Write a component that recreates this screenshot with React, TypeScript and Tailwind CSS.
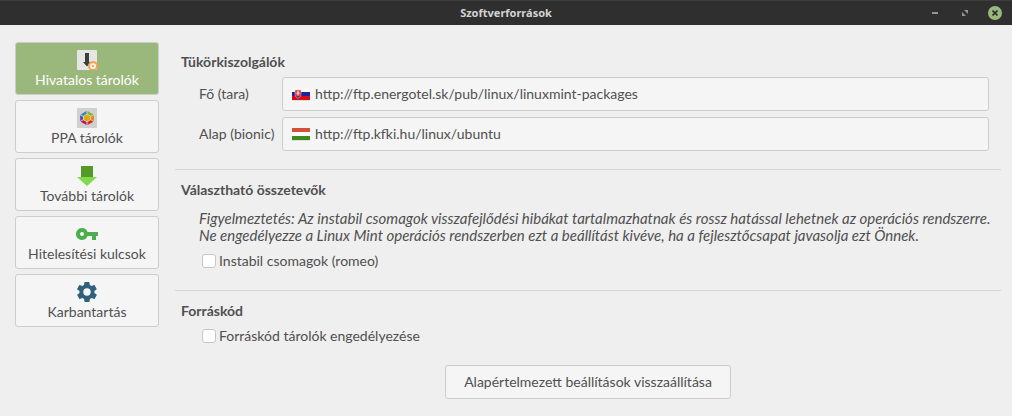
import { useState } from 'react';
import type { ReactNode } from 'react';

function RepositoryIcon() {
  return (
    <svg width="22" height="20" viewBox="0 0 22 20" aria-hidden="true">
      <rect x="1" width="20" height="20" rx="1" fill="#e6e6e6" />
      <path d="M9 3h4v9h1.500L11 16.500 7 12h2z" fill="#3c403d" />
      <circle cx="17" cy="16" r="5" fill="#f6a451" />
      <circle cx="17" cy="16" r="2.100" fill="none" stroke="#fff" strokeWidth="1.500" />
      <path d="M17 13v1M17 18v1M14 16h1M19 16h1M14.900 13.900l.7.7M18.400 17.400l.7.7M19.100 13.900l-.7.7M15.600 17.400l-.7.7" stroke="#fff" strokeWidth="1" />
    </svg>
  );
}

function PpaIcon() {
  return (
    <svg width="20" height="20" viewBox="0 0 20 20" aria-hidden="true">
      <rect width="20" height="20" rx="1" fill="#d0d0d0" />
      <path d="M9.500 3v3.300L6.500 8 3.600 6.400z" fill="#3584c8" />
      <path d="M10.500 3l6 3.400L13.500 8l-3-1.700z" fill="#86b52c" />
      <path d="M16.900 7.200v5.800L14 11.600V8.700z" fill="#f08020" />
      <path d="M16.400 13.700l-5.900 3.400v-3.300l3-1.800z" fill="#d5281f" />
      <path d="M9.500 17.100l-5.900-3.400L6.500 12l3 1.800z" fill="#b8195f" />
      <path d="M3.100 13V7.200L6 8.700v2.900z" fill="#5a4fae" />
      <path d="M10 6.200l3.400 1.900v3.800L10 13.800l-3.400-1.900V8.100z" fill="#d9a912" stroke="#eadfb0" strokeWidth=".6" />
    </svg>
  );
}

function DownloadIcon() {
  return (
    <svg width="20" height="20" viewBox="0 0 20 20" aria-hidden="true">
      <path d="M4 0h12v11H4z" fill="#539a27" />
      <path d="M0 11h20L10 20z" fill="#83d94b" />
    </svg>
  );
}

function KeyIcon() {
  return (
    <svg width="22" height="20" viewBox="0 0 22 20" aria-hidden="true">
      <path
        fillRule="evenodd"
        d="M6 4a6 6 0 0 1 5.600 4H22v4h-2v4h-4v-4h-4.400A6 6 0 1 1 6 4zm0 4a2 2 0 1 0 0 4 2 2 0 0 0 0-4z"
        fill="#4cae50"
      />
    </svg>
  );
}

function GearIcon() {
  return (
    <svg width="20" height="20" viewBox="2 2 20 20" aria-hidden="true">
      <path
        d="M19.4 13a7.8 7.8 0 0 0 0-2l2.1-1.6c.2-.2.2-.4.1-.6l-2-3.5c-.1-.2-.4-.3-.6-.2l-2.5 1a7.3 7.3 0 0 0-1.7-1l-.4-2.7a.5.5 0 0 0-.5-.4h-4c-.2 0-.4.2-.5.4L9 5.1a7.3 7.3 0 0 0-1.7 1l-2.5-1c-.2-.1-.5 0-.6.2l-2 3.5c-.1.2-.1.5.1.6L4.5 11a7.8 7.8 0 0 0 0 2l-2.1 1.6c-.2.2-.2.4-.1.6l2 3.5c.1.2.4.3.6.2l2.5-1c.5.4 1.1.7 1.7 1l.4 2.7c0 .2.2.4.5.4h4c.2 0 .4-.2.5-.4l.4-2.7a7.3 7.3 0 0 0 1.7-1l2.5 1c.2.1.5 0 .6-.2l2-3.5c.1-.2.1-.5-.1-.6zM12 15.7a3.7 3.7 0 1 1 0-7.4 3.7 3.7 0 0 1 0 7.4z"
        fill="#31607a"
        fillRule="evenodd"
      />
    </svg>
  );
}

function SlovakFlag() {
  return (
    <svg width="18" height="14" viewBox="0 0 18 14" aria-hidden="true">
      <path d="M0 1h18v4H0z" fill="#f8f8f8" />
      <path d="M0 5h18v4H0z" fill="#1b249b" />
      <path d="M0 9h18v4H0z" fill="#d90c12" />
      <path d="M0 13h18v1H0z" fill="#dedede" />
      <path d="M3 3h6v4.500c0 1.800-1.200 2.900-3 3.700-1.800-.8-3-1.900-3-3.700z" fill="#e32b34" stroke="#f5d4d6" strokeWidth=".5" />
      <path d="M6 3.800v5M4.700 5.100h2.600M4.300 6.800h3.400" stroke="#fff" strokeWidth=".8" />
      <path d="M4 9.400q2-1.500 4 0l-2 1.500z" fill="#3340a8" />
    </svg>
  );
}

function HungarianFlag() {
  return (
    <svg width="18" height="14" viewBox="0 0 18 14" aria-hidden="true">
      <path d="M0 1h18v4H0z" fill="#d05038" />
      <path d="M0 5h18v4H0z" fill="#f9f9f9" />
      <path d="M0 9h18v4H0z" fill="#3d8a1c" />
      <path d="M0 13h18v1H0z" fill="#dedede" />
    </svg>
  );
}

const pages = [
  { id: 'official', label: 'Hivatalos tárolók', icon: <RepositoryIcon /> },
  { id: 'ppa', label: 'PPA tárolók', icon: <PpaIcon /> },
  { id: 'additional', label: 'További tárolók', icon: <DownloadIcon /> },
  { id: 'keys', label: 'Hitelesítési kulcsok', icon: <KeyIcon /> },
  { id: 'maintenance', label: 'Karbantartás', icon: <GearIcon /> },
];

const mirrors = [
  { id: 'main', label: 'Fő (tara)', url: 'http://ftp.energotel.sk/pub/linux/linuxmint-packages', flag: <SlovakFlag /> },
  { id: 'base', label: 'Alap (bionic)', url: 'http://ftp.kfki.hu/linux/ubuntu', flag: <HungarianFlag /> },
];

function TitleBar() {
  return (
    <header className="grid h-[25px] grid-cols-[1fr_auto_1fr] items-center border-t border-[#3d3d3d] bg-[#2f2f2f] px-[10px]">
      <h1 className="col-start-2 font-['Noto_Sans',sans-serif] text-[11px] font-bold text-[#d4d4d4]">Szoftverforrások</h1>
      <div className="flex items-center justify-end gap-4">
        <button aria-label="Kis méret" className="flex h-[14px] w-[14px] items-center justify-center">
          <svg width="6" height="2" viewBox="0 0 6 2"><path d="M0 0h6v2H0z" fill="#949494" /></svg>
        </button>
        <button aria-label="Teljes méret" className="flex h-[14px] w-[14px] items-center justify-center">
          <svg width="6" height="6" viewBox="0 0 6 6">
            <path d="M2 0h4v4zM0 2l4 4H0z" fill="#949494" />
          </svg>
        </button>
        <button aria-label="Bezárás" className="flex h-[14px] w-[14px] items-center justify-center rounded-full bg-[#9ab87c]">
          <svg width="6" height="6" viewBox="0 0 6 6">
            <path d="M.5.5l5 5M5.500.5l-5 5" stroke="#2f2f2f" strokeWidth="1.600" />
          </svg>
        </button>
      </div>
    </header>
  );
}

function CheckRow({ id, label }: { id: string; label: string }) {
  return (
    <div className="flex h-5 items-center gap-[3px] pl-[27px]">
      <input
        id={id}
        type="checkbox"
        className="h-[14px] w-[14px] appearance-none rounded-[3px] border border-[#c6c6c6] bg-white checked:bg-[#9ab87c]"
      />
      <label htmlFor={id}>{label}</label>
    </div>
  );
}

function SectionTitle({ children }: { children: ReactNode }) {
  return <h2 className="pl-[6px] font-bold">{children}</h2>;
}

export default function App() {
  const [page, setPage] = useState('official');

  return (
    <div className="min-h-screen bg-[#efefef] font-['Lato',sans-serif] text-[14px] leading-5 text-[#505050]">
      <TitleBar />

      <div className="flex gap-4 pt-[17px] pr-[11px] pb-[17px] pl-[15px]">
        <nav className="flex w-36 shrink-0 flex-col gap-[5px]">
          {pages.map((item) => (
            <button
              key={item.id}
              onClick={() => setPage(item.id)}
              className={`flex h-[53px] flex-col items-center rounded-[3px] border border-[#cdcdcd] pt-[7px] ${
                page === item.id ? 'bg-[#9ab87c] text-white' : 'bg-[#f5f5f5]'
              }`}
            >
              {item.icon}
              <span>{item.label}</span>
            </button>
          ))}
        </nav>

        <main className="min-w-0 flex-1 pt-[10px]">
          <section className="border-b border-[#d7d7d7] pb-[18px]">
            <SectionTitle>Tükörkiszolgálók</SectionTitle>
            <div className="mt-[5px] grid grid-cols-[80px_1fr] items-center gap-x-[3px] gap-y-[6px] pr-3 pl-6">
              {mirrors.map((mirror) => (
                <div key={mirror.id} className="contents">
                  <label htmlFor={mirror.id} className="whitespace-nowrap">{mirror.label}</label>
                  <button
                    id={mirror.id}
                    className="flex h-[34px] min-w-0 items-center gap-[5px] rounded-[3px] border border-[#cdcdcd] bg-[#f5f5f5] px-[9px] text-left"
                  >
                    {mirror.flag}
                    <span>{mirror.url}</span>
                  </button>
                </div>
              ))}
            </div>
          </section>

          <section className="border-b border-[#d7d7d7] pt-[10px] pb-[19px]">
            <SectionTitle>Választható összetevők</SectionTitle>
            <p className="mt-[10px] mb-[7px] pl-6 text-[15px] leading-[17px] italic">
              Figyelmeztetés: Az instabil csomagok visszafejlődési hibákat tartalmazhatnak és rossz hatással lehetnek az operációs rendszerre.
              <br />
              Ne engedélyezze a Linux Mint operációs rendszerben ezt a beállítást kivéve, ha a fejlesztőcsapat javasolja ezt Önnek.
            </p>
            <CheckRow id="unstable" label="Instabil csomagok (romeo)" />
          </section>

          <section className="pt-[10px]">
            <SectionTitle>Forráskód</SectionTitle>
            <div className="mt-[5px]">
              <CheckRow id="sources" label="Forráskód tárolók engedélyezése" />
            </div>
          </section>

          <div className="mt-[19px] flex justify-center">
            <button className="h-[34px] rounded-[3px] border border-[#cdcdcd] bg-[#f5f5f5] px-[18px]">
              Alapértelmezett beállítások visszaállítása
            </button>
          </div>
        </main>
      </div>
    </div>
  );
}
